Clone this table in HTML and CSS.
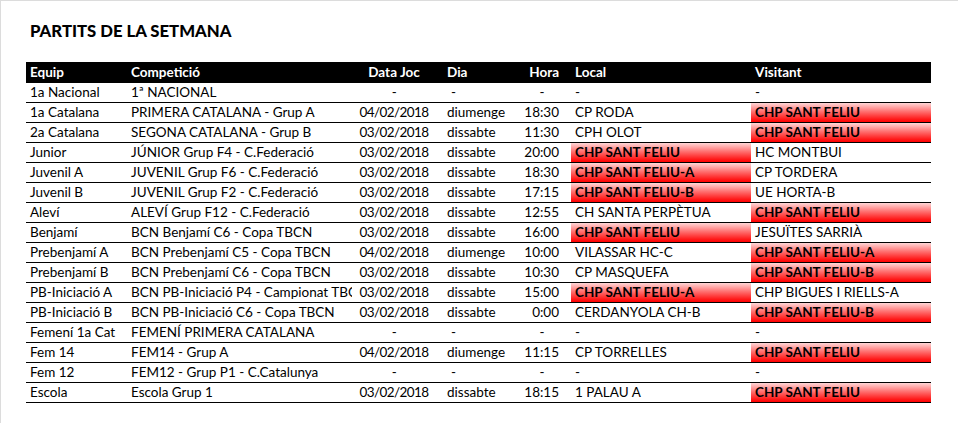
FILE: index.html
```html
<!DOCTYPE html>
<html lang="ca">
<head>
<meta charset="utf-8">
<title>Partits de la setmana</title>
<link rel="stylesheet" href="styles.css">
</head>
<body>
<div class="page">
  <h1 class="title">PARTITS DE LA SETMANA</h1>
  <div class="table">
    <div class="row head">
      <div class="c">Equip</div><div class="c">Competició</div><div class="c date">Data Joc</div><div class="c">Dia</div><div class="c hora">Hora</div><div class="c">Local</div><div class="c">Visitant</div>
    </div>
    <div class="row">
      <div class="c">1a Nacional</div><div class="c">1ª NACIONAL</div><div class="c date">-</div><div class="c dia-dash">-</div><div class="c hora dash">-</div><div class="c">-</div><div class="c">-</div>
    </div>
    <div class="row">
      <div class="c">1a Catalana</div><div class="c">PRIMERA CATALANA - Grup A</div><div class="c date">04/02/2018</div><div class="c">diumenge</div><div class="c hora">18:30</div><div class="c">CP RODA</div><div class="c hl">CHP SANT FELIU</div>
    </div>
    <div class="row">
      <div class="c">2a Catalana</div><div class="c">SEGONA CATALANA - Grup B</div><div class="c date">03/02/2018</div><div class="c">dissabte</div><div class="c hora">11:30</div><div class="c">CPH OLOT</div><div class="c hl">CHP SANT FELIU</div>
    </div>
    <div class="row">
      <div class="c">Junior</div><div class="c">JÚNIOR Grup F4 - C.Federació</div><div class="c date">03/02/2018</div><div class="c">dissabte</div><div class="c hora">20:00</div><div class="c hl">CHP SANT FELIU</div><div class="c">HC MONTBUI</div>
    </div>
    <div class="row">
      <div class="c">Juvenil A</div><div class="c">JUVENIL Grup F6 - C.Federació</div><div class="c date">03/02/2018</div><div class="c">dissabte</div><div class="c hora">18:30</div><div class="c hl">CHP SANT FELIU-A</div><div class="c">CP TORDERA</div>
    </div>
    <div class="row">
      <div class="c">Juvenil B</div><div class="c">JUVENIL Grup F2 - C.Federació</div><div class="c date">03/02/2018</div><div class="c">dissabte</div><div class="c hora">17:15</div><div class="c hl">CHP SANT FELIU-B</div><div class="c">UE HORTA-B</div>
    </div>
    <div class="row">
      <div class="c">Aleví</div><div class="c">ALEVÍ Grup F12 - C.Federació</div><div class="c date">03/02/2018</div><div class="c">dissabte</div><div class="c hora">12:55</div><div class="c">CH SANTA PERPÈTUA</div><div class="c hl">CHP SANT FELIU</div>
    </div>
    <div class="row">
      <div class="c">Benjamí</div><div class="c">BCN Benjamí C6 - Copa TBCN</div><div class="c date">03/02/2018</div><div class="c">dissabte</div><div class="c hora">16:00</div><div class="c hl">CHP SANT FELIU</div><div class="c">JESUÏTES SARRIÀ</div>
    </div>
    <div class="row">
      <div class="c">Prebenjamí A</div><div class="c">BCN Prebenjamí C5 - Copa TBCN</div><div class="c date">04/02/2018</div><div class="c">diumenge</div><div class="c hora">10:00</div><div class="c">VILASSAR HC-C</div><div class="c hl">CHP SANT FELIU-A</div>
    </div>
    <div class="row">
      <div class="c">Prebenjamí B</div><div class="c">BCN Prebenjamí C6 - Copa TBCN</div><div class="c date">03/02/2018</div><div class="c">dissabte</div><div class="c hora">10:30</div><div class="c">CP MASQUEFA</div><div class="c hl">CHP SANT FELIU-B</div>
    </div>
    <div class="row">
      <div class="c">PB-Iniciació A</div><div class="c">BCN PB-Iniciació P4 - Campionat TBCN</div><div class="c date">03/02/2018</div><div class="c">dissabte</div><div class="c hora">15:00</div><div class="c hl">CHP SANT FELIU-A</div><div class="c">CHP BIGUES I RIELLS-A</div>
    </div>
    <div class="row">
      <div class="c">PB-Iniciació B</div><div class="c">BCN PB-Iniciació C6 - Copa TBCN</div><div class="c date">03/02/2018</div><div class="c">dissabte</div><div class="c hora">0:00</div><div class="c">CERDANYOLA CH-B</div><div class="c hl">CHP SANT FELIU-B</div>
    </div>
    <div class="row">
      <div class="c">Femení 1a Cat</div><div class="c">FEMENÍ PRIMERA CATALANA</div><div class="c date">-</div><div class="c dia-dash">-</div><div class="c hora dash">-</div><div class="c">-</div><div class="c">-</div>
    </div>
    <div class="row">
      <div class="c">Fem 14</div><div class="c">FEM14 - Grup A</div><div class="c date">04/02/2018</div><div class="c">diumenge</div><div class="c hora">11:15</div><div class="c">CP TORRELLES</div><div class="c hl">CHP SANT FELIU</div>
    </div>
    <div class="row">
      <div class="c">Fem 12</div><div class="c">FEM12 - Grup P1 - C.Catalunya</div><div class="c date">-</div><div class="c dia-dash">-</div><div class="c hora dash">-</div><div class="c">-</div><div class="c">-</div>
    </div>
    <div class="row">
      <div class="c">Escola</div><div class="c">Escola Grup 1</div><div class="c date">03/02/2018</div><div class="c">dissabte</div><div class="c hora">18:15</div><div class="c">1 PALAU A</div><div class="c hl">CHP SANT FELIU</div>
    </div>
  </div>
</div>
</body>
</html>
```
FILE: styles.css
```css
html, body {
  margin: 0;
  padding: 0;
  background: #fff;
}
body {
  font-family: Lato, "Liberation Sans", sans-serif;
  color: #000;
  font-size: 13.5px;
}
.page {
  box-sizing: border-box;
  height: 423px;
  border-left: 1px solid #dcdcdc;
  border-top: 1px solid #dcdcdc;
  padding: 20px 0 0 25px;
}
.title {
  margin: 0 0 21px 0;
  padding-left: 4px;
  font-size: 16.7px;
  line-height: 20px;
  font-weight: 900;
}
.table {
  width: 905px;
}
.row {
  display: grid;
  grid-template-columns: 101px 225px 91px 70px 58px 180px 180px;
  height: 20px;
  box-sizing: border-box;
  border-bottom: 1px solid #000;
}
.row.head {
  height: 21px;
  border-bottom: none;
  background: #000;
  color: #fff;
  font-weight: bold;
}
.c {
  padding-left: 4px;
  line-height: 19px;
  white-space: nowrap;
  overflow: hidden;
}
.head .c {
  line-height: 21px;
}
.date {
  padding-left: 0;
  padding-right: 7px;
  text-align: center;
  letter-spacing: -0.6px;
}
.head .date {
  letter-spacing: 0;
}
.dia-dash {
  padding-left: 8px;
}
.hora {
  padding-left: 0;
  padding-right: 12px;
  text-align: right;
}
.hora.dash {
  padding-right: 0;
  text-align: center;
}
.hl {
  font-weight: bold;
  background: linear-gradient(to bottom, #ffd6d6 0%, #ff7070 45%, #ff1a1a 85%, #ff0000 100%);
}
```
